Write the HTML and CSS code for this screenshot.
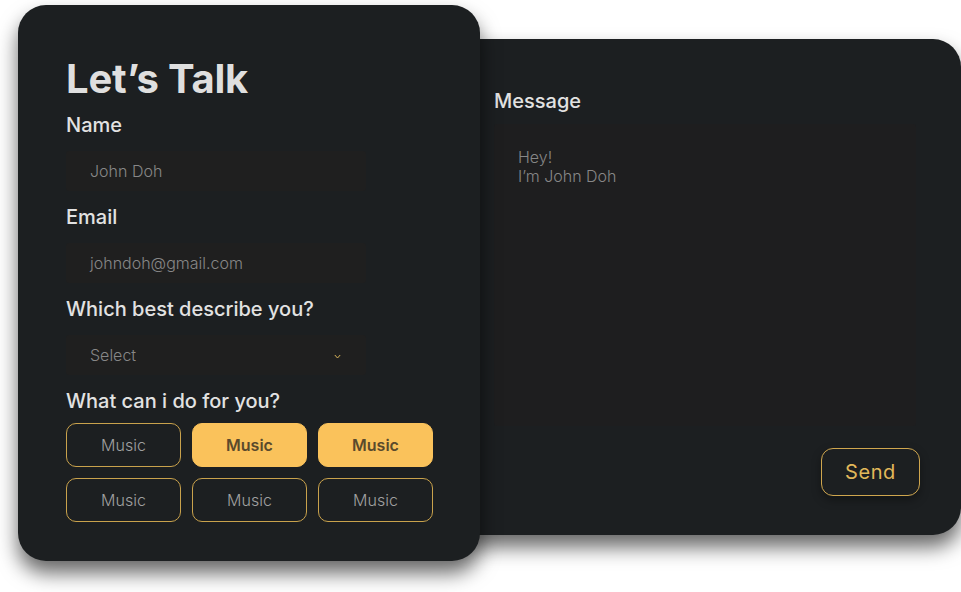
FILE: index.html
```
<!DOCTYPE html>
<html lang="en">
<head>
<meta charset="utf-8">
<title>Let's Talk</title>
<link rel="stylesheet" href="styles.css">
</head>
<body>
<div class="stage">
  <section class="card card-left">
    <h1 class="title">Let’s Talk</h1>
    <div class="group">
      <div class="label">Name</div>
      <div class="field"><span class="ph">John Doh</span></div>
    </div>
    <div class="group">
      <div class="label">Email</div>
      <div class="field"><span class="ph">johndoh@gmail.com</span></div>
    </div>
    <div class="group">
      <div class="label">Which best describe you?</div>
      <div class="field field-select">
        <span class="ph">Select</span>
        <svg class="chev" width="7" height="5" viewBox="0 0 7 5"><polyline points="0.8,1 3.5,4 6.2,1" fill="none" stroke="#d8b45a" stroke-width="1"/></svg>
      </div>
    </div>
    <div class="label label-chips">What can i do for you?</div>
    <div class="chips">
      <div class="chip">Music</div>
      <div class="chip chip-on">Music</div>
      <div class="chip chip-on">Music</div>
      <div class="chip">Music</div>
      <div class="chip">Music</div>
      <div class="chip">Music</div>
    </div>
  </section>
  <section class="card card-right">
    <div class="label label-msg">Message</div>
    <div class="textarea">Hey!<br>I’m John Doh</div>
    <div class="actions"><div class="send">Send</div></div>
  </section>
</div>
</body>
</html>
```
FILE: styles.css
```
* { box-sizing: border-box; }
html, body { margin: 0; padding: 0; }
body {
  background: #ffffff;
  font-family: Inter, "Noto Sans", sans-serif;
  width: 961px;
  height: 592px;
  overflow: hidden;
}
.stage {
  display: flex;
  align-items: flex-start;
  padding: 5px 0 0 18px;
}
.card {
  background: #1c1f21;
  border-radius: 28px;
}
.card-left {
  position: relative;
  z-index: 2;
  width: 462px;
  padding: 50px 47px 39px 48px;
  box-shadow: 0 12px 20px rgba(0,0,0,0.6);
}
.card-right {
  position: relative;
  z-index: 1;
  width: 511px;
  margin-left: -30px;
  margin-top: 34px;
  padding: 50px 41px 39px 44px;
  box-shadow: 0 12px 20px rgba(0,0,0,0.6);
}
.title {
  margin: 0 0 10px;
  font-size: 40px;
  line-height: 48px;
  font-weight: 700;
  color: #dfdfdf;
  letter-spacing: -0.2px;
}
.group { margin-bottom: 14px; }
.label {
  font-size: 20px;
  line-height: 24px;
  font-weight: 450;
  color: #e2e2e2;
  margin-bottom: 14px;
}
.label-chips { margin-bottom: 10px; }
.label-msg { margin-bottom: 11px; }
.field {
  width: 300px;
  height: 40px;
  background: #1f1f1f;
  border-radius: 3px;
  display: flex;
  align-items: center;
  padding-left: 24px;
  padding-right: 25px;
}
.field-select { justify-content: space-between; }
.chev { margin-top: 3px; }
.ph {
  font-size: 16px;
  font-weight: 300;
  color: #878787;
}
.chips {
  display: grid;
  grid-template-columns: repeat(3, 1fr);
  gap: 11px 11px;
}
.chip {
  height: 44px;
  border: 1.3px solid #c9a24c;
  border-radius: 10px;
  display: flex;
  align-items: center;
  justify-content: center;
  font-size: 16px;
  font-weight: 300;
  color: #a0a0a0;
}
.chip-on {
  background: #fac25b;
  border-color: #fac25b;
  color: #5b4a2c;
  font-weight: 600;
}
.textarea {
  width: 422px;
  height: 302px;
  background: #1e1e1f;
  border-radius: 3px;
  padding: 24px 24px;
  font-size: 16px;
  line-height: 19px;
  font-weight: 300;
  color: #878787;
}
.actions {
  display: flex;
  justify-content: flex-end;
  margin-top: 22px;
}
.send {
  width: 99px;
  height: 48px;
  border: 1.3px solid #cfa64e;
  border-radius: 12px;
  display: flex;
  align-items: center;
  justify-content: center;
  font-size: 20px;
  font-weight: 400;
  color: #e2b85a;
  letter-spacing: 0.6px;
  box-shadow: 0 4px 10px rgba(0,0,0,0.35);
}
```
